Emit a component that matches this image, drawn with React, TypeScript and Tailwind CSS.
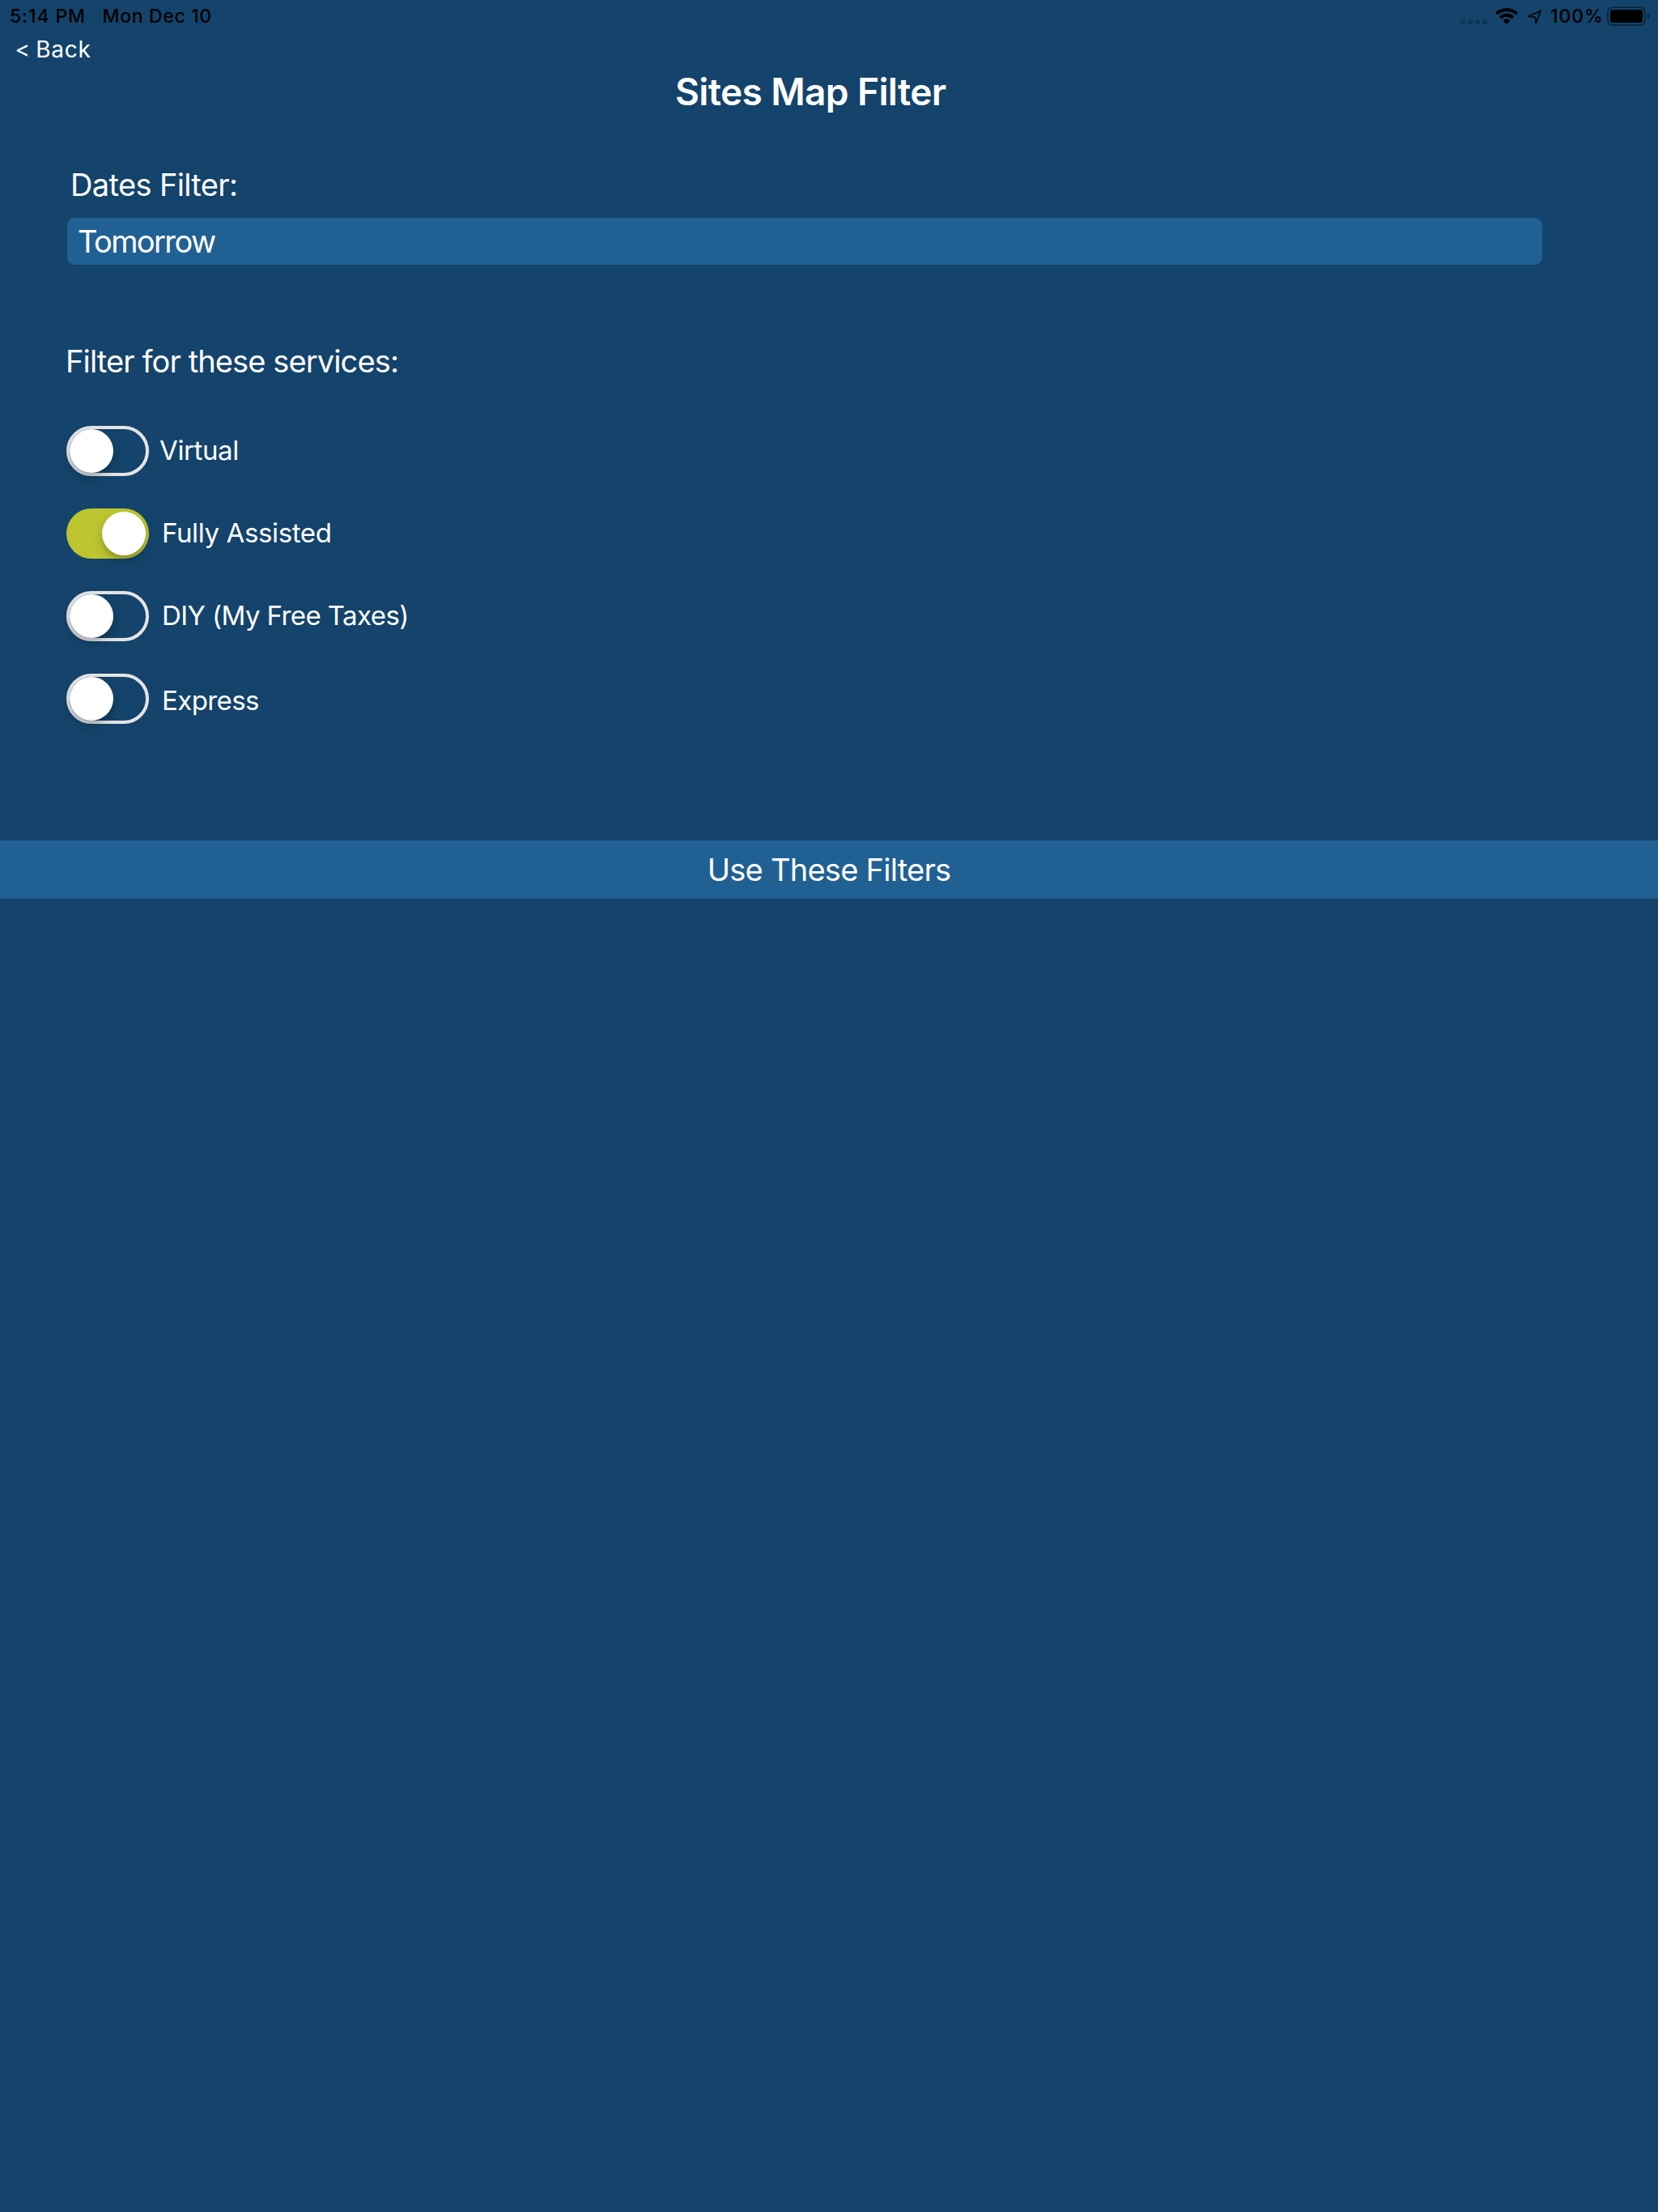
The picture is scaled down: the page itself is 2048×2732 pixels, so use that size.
import React, { useState } from 'react';

type Service = { label: string; gap: string; nudge: string; tracking: string };

const services: Service[] = [
  { label: 'Virtual', gap: 'ml-[13px]', nudge: 'pb-0.5', tracking: 'tracking-[-0.38px]' },
  { label: 'Fully Assisted', gap: 'ml-[16px]', nudge: 'pb-0.5', tracking: 'tracking-[-0.38px]' },
  { label: 'DIY (My Free Taxes)', gap: 'ml-[16px]', nudge: 'pb-0.5', tracking: 'tracking-[-0.58px]' },
  { label: 'Express', gap: 'ml-[16px]', nudge: 'pt-[3px]', tracking: 'tracking-[-0.6px]' },
];

function Toggle({ on, label, onChange }: { on: boolean; label: string; onChange: () => void }) {
  return (
    <button
      type="button"
      role="switch"
      aria-checked={on}
      aria-label={label}
      onClick={onChange}
      className={
        on
          ? 'flex h-[62px] w-[102px] shrink-0 justify-end rounded-full bg-[#bdc62f] p-1'
          : 'flex h-[62px] w-[102px] shrink-0 justify-start rounded-full border-4 border-[#e5e5e5]'
      }
    >
      <span className="size-[54px] rounded-full bg-white shadow-[0_6px_14px_rgba(0,0,0,0.2),0_4px_3px_rgba(0,0,0,0.08)]" />
    </button>
  );
}

function WifiIcon() {
  return (
    <svg className="ml-[10px] mt-[10px] h-5 w-7 shrink-0" viewBox="0 0 28 20">
      <path d="M14 0C8.600 0 3.700 2.100 0 5.600L2.700 8.400C5.700 5.600 9.600 4 14 4s8.300 1.600 11.300 4.400L28 5.600C24.300 2.100 19.400 0 14 0z" />
      <path d="M14 6.800c-3.500 0-6.700 1.300-9.200 3.600l2.700 2.800C9.200 11.600 11.500 10.700 14 10.700s4.800.9 6.500 2.500l2.700-2.800C20.700 8.100 17.500 6.800 14 6.800z" />
      <path d="M14 13.600c-1.700 0-3.200.6-4.400 1.700L14 20l4.400-4.700c-1.200-1.100-2.700-1.700-4.400-1.700z" />
    </svg>
  );
}

function LocationIcon() {
  return (
    <svg className="ml-[10px] mt-[11px] h-5 w-5 shrink-0" viewBox="0 0 20 20">
      <path
        d="M18.200 2.300 2.500 9.500l8.700.700 1 7.300z"
        fill="none"
        stroke="#000"
        strokeWidth="1.600"
        strokeLinejoin="round"
      />
    </svg>
  );
}

function BatteryIcon() {
  return (
    <svg className="ml-2 mt-2 h-6 w-[54px] shrink-0" viewBox="0 0 54 24">
      <rect x="1" y="1" width="46" height="22" rx="6" fill="none" stroke="#000" strokeOpacity="0.4" strokeWidth="2" />
      <rect x="4" y="4" width="40" height="16" rx="3" />
      <path d="M50 8c1.900.7 3 2.200 3 4s-1.100 3.300-3 4z" fillOpacity="0.4" />
    </svg>
  );
}

function StatusBar() {
  return (
    <div className="flex h-10 text-[23px] leading-10 font-medium text-black">
      <span className="ml-3 w-[114.5px] tracking-[0.9px]">5:14 PM</span>
      <span className="tracking-[0.66px]">Mon Dec 10</span>
      <div className="ml-auto flex w-[244px] items-start">
        <div className="mt-6 flex shrink-0 gap-[3px]">
          {[0, 1, 2, 3].map((dot) => (
            <span key={dot} className="size-1.5 rounded-[2px] bg-black/20" />
          ))}
        </div>
        <WifiIcon />
        <LocationIcon />
        <span className="ml-[10px] w-[62px] shrink-0 tracking-[0.9px]">100%</span>
        <BatteryIcon />
      </div>
    </div>
  );
}

export default function App() {
  const [active, setActive] = useState([false, true, false, false]);
  const toggle = (index: number) => setActive(active.map((on, i) => (i === index ? !on : on)));

  return (
    <div className="flex min-h-screen w-full flex-col overflow-hidden bg-[#14436b] font-['Inter',sans-serif] whitespace-nowrap text-white">
      <StatusBar />
      <button
        type="button"
        className="ml-[18.5px] self-start text-[28px] leading-[42px] tracking-[0.7px] [word-spacing:-2px]"
      >
        &lt; Back
      </button>
      <h1 className="ml-[834px] text-[46px] leading-[62px] font-semibold tracking-[-0.6px]">
        Sites Map Filter
      </h1>

      <label className="mt-[54px] ml-[87px] text-[38px] leading-[60px] tracking-[-0.64px]">Dates Filter:</label>
      <div className="mt-[11px] mr-[143px] ml-[83px] h-[58px] rounded-[9px] bg-[#216093] pl-[13px] text-[38px] leading-[59px] tracking-[-1.6px]">
        Tomorrow
      </div>

      <h2 className="mt-[89px] ml-[81px] text-[38px] leading-[60px] tracking-[-0.88px]">
        Filter for these services:
      </h2>
      <div className="mt-[50px] ml-[82px] flex flex-col gap-10">
        {services.map((service, i) => (
          <div key={service.label} className="flex h-[62px] items-center text-[33px] leading-[56px]">
            <Toggle on={active[i]} label={service.label} onChange={() => toggle(i)} />
            <span className={`${service.gap} ${service.nudge} ${service.tracking}`}>{service.label}</span>
          </div>
        ))}
      </div>

      <button
        type="button"
        className="mt-36 h-[72px] w-full bg-[#216093] text-center text-[38px] leading-[72px] tracking-[-0.74px]"
      >
        Use These Filters
      </button>
    </div>
  );
}
